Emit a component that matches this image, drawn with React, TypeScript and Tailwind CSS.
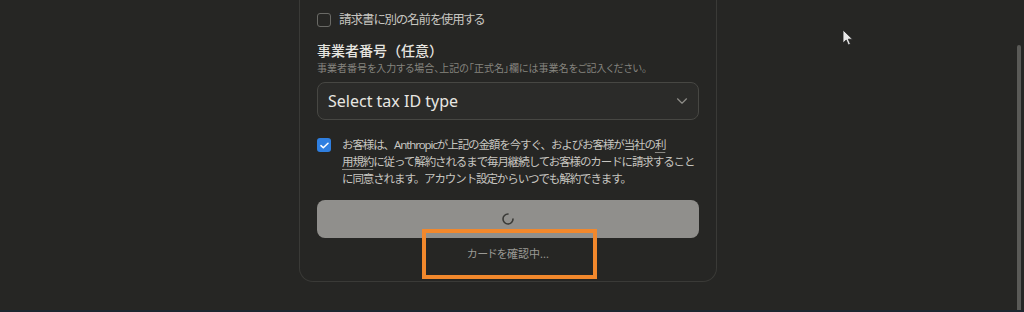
import React from 'react';

const font = { fontFamily: '"Noto Sans", "Noto Sans CJK JP", sans-serif' };

export default function App() {
  return (
    <div className="relative h-[312px] w-[1024px] overflow-hidden bg-[#262624]" style={font}>
      <div className="flex justify-center pr-[8px]">
        <div className="relative w-[418px] rounded-b-[14px] border border-t-0 border-[#3a3a37] bg-[#262624] px-[17px] pt-[10px] pb-[19px]">
          {/* alternate name */}
          <div className="flex h-[20px] items-center gap-[8px]">
            <div className="h-[14px] w-[14px] rounded-[3px] border border-[#6a6a66]" />
            <span className="text-[12.5px] leading-[20px] tracking-[-1px] text-[#c6c5c0] [font-feature-settings:'palt']">請求書に別の名前を使用する</span>
          </div>

          {/* tax id */}
          <div className="mt-[11px] text-[14px] leading-[20px] font-medium text-[#e6e5e0]">事業者番号（任意）</div>
          <div className="whitespace-nowrap text-[10px] leading-[14px] text-[#85847f] [font-feature-settings:'palt']">
            事業者番号を入力する場合、上記の「正式名」欄には事業名をご記入ください。
          </div>

          <div className="mt-[7px] flex h-[38px] items-center justify-between rounded-[8px] border border-[#474743] bg-[#2b2b29] pl-[10px] pr-[10px]">
            <span className="text-[16px] text-[#e8e7e2]">Select tax ID type</span>
            <svg width="12" height="8" viewBox="0 0 12 8" fill="none">
              <path d="M1.5 1.8 6 6.2 10.5 1.8" stroke="#8e8d88" strokeWidth="1.2" strokeLinecap="round" strokeLinejoin="round" />
            </svg>
          </div>

          {/* consent */}
          <div className="mt-[16px] flex items-start gap-[11px]">
            <div className="mt-[2px] flex h-[14px] w-[14px] shrink-0 items-center justify-center rounded-[3px] bg-[#2f7fe0]">
              <svg width="9" height="7" viewBox="0 0 9 7" fill="none">
                <path d="M1 3.6 3.3 5.8 8 1.2" stroke="#ffffff" strokeWidth="1.5" strokeLinecap="round" strokeLinejoin="round" />
              </svg>
            </div>
            <p className="whitespace-nowrap text-[11.5px] leading-[17px] tracking-[-1.1px] text-[#c6c5c0]">
              お客様は、Anthropicが上記の金額を今すぐ、およびお客様が当社の
              <span className="underline decoration-[#8a8984] underline-offset-[3px]">利</span>
              <br />
              <span className="underline decoration-[#8a8984] underline-offset-[3px]">用規約</span>
              に従って解約されるまで毎月継続してお客様のカードに請求すること
              <br />
              に同意されます。アカウント設定からいつでも解約できます。
            </p>
          </div>

          {/* submit */}
          <button className="mt-[13px] flex h-[38px] w-full items-center justify-center rounded-[8px] bg-[#908f8c]">
            <svg width="14" height="14" viewBox="0 0 14 14" fill="none">
              <path d="M12 7A5 5 0 1 1 7 2" stroke="#3a3a37" strokeWidth="1.6" strokeLinecap="round" />
            </svg>
          </button>
          <div className="mt-[8px] text-center text-[11px] leading-[16px] text-[#9a9994] [font-feature-settings:'palt']">カードを確認中...</div>

          {/* annotation box */}
          <div className="absolute left-[122px] bottom-[2px] h-[50px] w-[175px] border-[4px] border-[#f2882c]" />
        </div>
      </div>

      {/* scrollbar */}
      <div className="absolute right-[3px] top-[45px] h-[267px] w-[4px] rounded-t-[2px] bg-[#5a5a57]" />

      {/* cursor */}
      <svg className="absolute left-[842px] top-[29px]" width="12" height="18" viewBox="0 0 12 18">
        <path d="M1 1v13l3.2-3 2.2 5 2-0.9-2.1-4.9H10.5Z" fill="#e8e8e8" stroke="#222" strokeWidth="0.8" strokeLinejoin="round" />
      </svg>

      <div className="absolute bottom-0 left-0 h-[2px] w-full bg-[#1d2730]" />
    </div>
  );
}
